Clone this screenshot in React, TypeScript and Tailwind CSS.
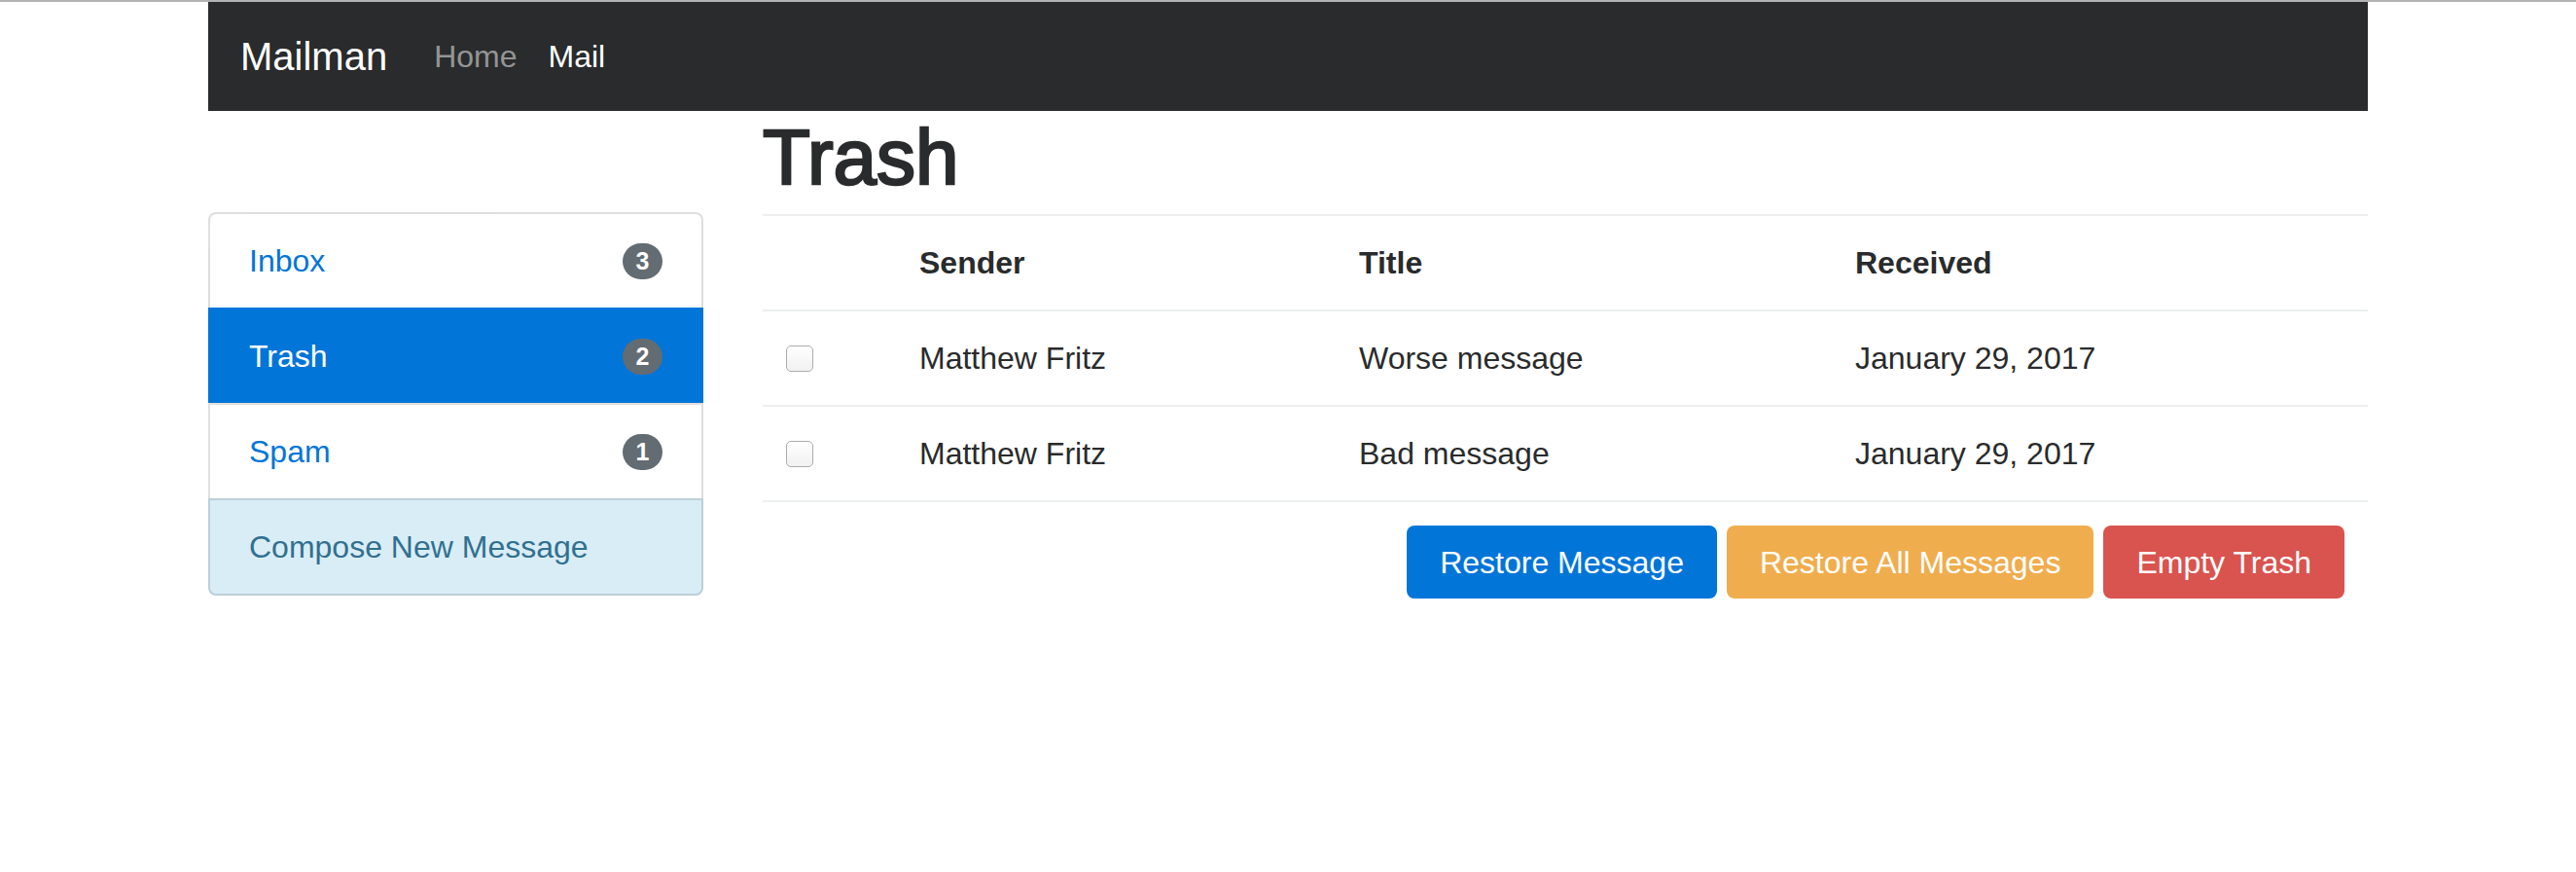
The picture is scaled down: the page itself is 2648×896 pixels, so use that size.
import React from "react";

type Folder = {
  name: string;
  count: number;
  active?: boolean;
};

const folders: Folder[] = [
  { name: "Inbox", count: 3 },
  { name: "Trash", count: 2, active: true },
  { name: "Spam", count: 1 },
];

const messages = [
  { sender: "Matthew Fritz", title: "Worse message", received: "January 29, 2017" },
  { sender: "Matthew Fritz", title: "Bad message", received: "January 29, 2017" },
];

const Navbar: React.FC = () => (
  <nav className="h-[112px] bg-[#292b2c] flex items-center pl-[33px]">
    <a href="#" className="text-[40px] leading-[60px] text-white mr-[32px]">
      Mailman
    </a>
    <ul className="flex items-center text-[32px] leading-[48px]">
      <li>
        <a href="#" className="px-[16px] text-white/50">
          Home
        </a>
      </li>
      <li>
        <a href="#" className="px-[16px] text-white">
          Mail
        </a>
      </li>
    </ul>
  </nav>
);

const Sidebar: React.FC = () => (
  <aside className="w-[509px] shrink-0 mt-[104px]">
    <ul className="text-[32px] leading-[48px]">
      {folders.map((f, i) => (
        <li key={f.name}>
          <a
            href="#"
            className={
              f.active
                ? "flex items-center justify-between px-[40px] py-[24px] border-x-2 border-t-2 border-[#0275d8] bg-[#0275d8] text-white"
                : i === 0
                  ? "flex items-center justify-between px-[40px] py-[24px] border-x-2 border-t-2 border-black/[0.125] rounded-t-[8px] bg-white text-[#0275d8]"
                  : "flex items-center justify-between px-[40px] py-[24px] border-x-2 border-t-2 border-black/[0.125] bg-white text-[#0275d8]"
            }
          >
            <span>{f.name}</span>
            <span className="inline-flex items-center justify-center min-w-[41px] h-[37px] px-[12px] rounded-full bg-[#636c72] text-white text-[25px] leading-none font-bold">
              {f.count}
            </span>
          </a>
        </li>
      ))}
      <li>
        <a
          href="#"
          className="block px-[40px] py-[24px] border-2 border-black/[0.125] rounded-b-[8px] bg-[#d9edf7] text-[#31708f]"
        >
          Compose New Message
        </a>
      </li>
    </ul>
  </aside>
);

const Checkbox: React.FC = () => (
  <input
    type="checkbox"
    className="block appearance-none w-[28px] h-[27px] rounded-[5px] border border-[#acacac] bg-gradient-to-b from-white to-[#f1f1f1]"
  />
);

const TrashTable: React.FC = () => (
  <table className="w-full border-collapse text-[32px] leading-[48px]">
    <thead>
      <tr>
        <th className="w-[137px] p-[24px] border-t-2 border-[#eceeef] text-left font-bold"></th>
        <th className="w-[452px] p-[24px] border-t-2 border-[#eceeef] text-left font-bold">Sender</th>
        <th className="w-[510px] p-[24px] border-t-2 border-[#eceeef] text-left font-bold">Title</th>
        <th className="p-[24px] border-t-2 border-[#eceeef] text-left font-bold">Received</th>
      </tr>
    </thead>
    <tbody>
      {messages.map((m, i) => (
        <tr key={i} className="border-b-2 border-[#eceeef]">
          <td className="p-[24px] border-t-2 border-[#eceeef] align-middle">
            <Checkbox />
          </td>
          <td className="p-[24px] border-t-2 border-[#eceeef]">{m.sender}</td>
          <td className="p-[24px] border-t-2 border-[#eceeef]">{m.title}</td>
          <td className="p-[24px] border-t-2 border-[#eceeef]">{m.received}</td>
        </tr>
      ))}
    </tbody>
  </table>
);

export default function App() {
  return (
    <div
      className="min-h-screen bg-white border-t-2 border-[#b3b3b3] text-[#292b2c]"
      style={{ fontFamily: '"Liberation Sans", Arial, sans-serif' }}
    >
      <div className="w-[2220px] mx-auto">
        <Navbar />
        <div className="flex gap-[61px]">
          <Sidebar />
          <main className="flex-1">
            <h1 className="h-[90px] text-[80px] leading-[88px] mb-[16px] pt-[4px] font-normal [-webkit-text-stroke:2.5px_#292b2c]">
              Trash
            </h1>
            <TrashTable />
            <div className="flex justify-end gap-[10px] pr-[24px] mt-[24px] text-[32px] text-white">
              <button className="h-[75px] px-[34px] rounded-[8px] bg-[#0275d8]">Restore Message</button>
              <button className="h-[75px] px-[34px] rounded-[8px] bg-[#f0ad4e]">Restore All Messages</button>
              <button className="h-[75px] px-[34px] rounded-[8px] bg-[#d9534f]">Empty Trash</button>
            </div>
          </main>
        </div>
      </div>
    </div>
  );
}
